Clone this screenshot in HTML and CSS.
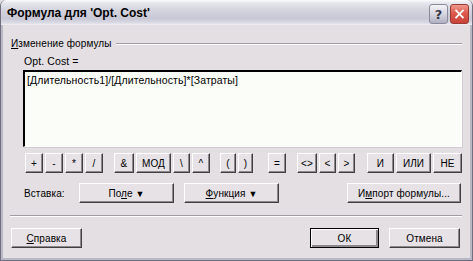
FILE: index.html
```html
<!DOCTYPE html>
<html lang="ru">
<head>
    <meta charset="UTF-8">
    <title>Формула для 'Opt. Cost'</title>
<link rel="stylesheet" href="styles.css">
</head>
<body>
    <div class="window">
        <div class="titlebar">
            <span class="title">Формула для 'Opt. Cost'</span>
            <div class="controls">
                <span class="ctl help">?</span>
                <span class="ctl close">
                    <svg width="19" height="20" viewBox="0 0 19 20">
                        <path d="M5 5.5 L14 14.5 M14 5.5 L5 14.5" stroke="#fff" stroke-width="2" fill="none"/>
                    </svg>
                </span>
            </div>
        </div>

        <div class="content">
            <div class="group-head">
                <span><u>И</u>зменение формулы</span>
                <div class="etch"></div>
            </div>

            <div class="group-body">
                <div class="field-label">Opt. Cost =</div>
                <div class="formula">[Длительность1]/[Длительность]*[Затраты]</div>

                <div class="ops">
                    <div class="op-group">
                        <button class="btn w18">+</button>
                        <button class="btn w18">-</button>
                        <button class="btn w18">*</button>
                        <button class="btn w18">/</button>
                    </div>
                    <div class="op-group g2">
                        <button class="btn w20">&amp;</button>
                        <button class="btn w35">МОД</button>
                        <button class="btn w17">\</button>
                        <button class="btn w18">^</button>
                    </div>
                    <div class="op-group g3">
                        <button class="btn w16">(</button>
                        <button class="btn w15">)</button>
                    </div>
                    <div class="op-group g4">
                        <button class="btn w18">=</button>
                    </div>
                    <div class="op-group g5">
                        <button class="btn w20">&lt;&gt;</button>
                        <button class="btn w17">&lt;</button>
                        <button class="btn w17">&gt;</button>
                    </div>
                    <div class="op-group g6">
                        <button class="btn w27">И</button>
                        <button class="btn w35">ИЛИ</button>
                        <button class="btn w29">НЕ</button>
                    </div>
                </div>

                <div class="insert-row">
                    <span class="insert-label">Вставка:</span>
                    <button class="btn drop">По<u>л</u>е <span class="arrow">&#9660;</span></button>
                    <button class="btn drop func"><u>Ф</u>ункция <span class="arrow">&#9660;</span></button>
                    <button class="btn import">И<u>м</u>порт формулы...</button>
                </div>
            </div>

            <div class="sep"></div>

            <div class="footer">
                <button class="btn wide"><u>С</u>правка</button>
                <div class="footer-right">
                    <button class="btn wide ok">ОК</button>
                    <button class="btn wide">Отмена</button>
                </div>
            </div>
        </div>
    </div>
</body>
</html>
```

FILE: styles.css
```css
body{
    margin: 0;
    background: #e3dfe3;
    font-family: "Liberation Sans", Arial, sans-serif;
    font-size: 10px;
    letter-spacing: 0.1px;
    color: #000;
}

.window{
    width: 473px;
    height: 261px;
    box-sizing: border-box;
    background: #e3dfe3;
    border: 1px solid #6f6f80;
    border-top: none;
    border-radius: 6px 6px 0 0;
    box-shadow: inset 2px 0 0 #b8b8c6, inset -2px 0 0 #b8b8c6, inset 0 -2px 0 #b8b8c6;
    overflow: hidden;
}

.titlebar{
    height: 25px;
    display: flex;
    align-items: center;
    justify-content: space-between;
    padding: 0 4px 0 7px;
    background: linear-gradient(#fbfbfd 0, #e6e6ee 3px, #d4d4de 40%, #c8c8d6 75%, #dcdce6 92%, #f0f0f4 100%);
    margin: 0 -1px;
}

.title{
    font-family: "Liberation Sans", Arial, sans-serif;
    font-weight: bold;
    font-size: 12px;
    letter-spacing: 0;
    color: #000;
    padding-top: 1px;
}

.controls{
    display: flex;
    gap: 2px;
    padding-top: 3px;
}

.ctl{
    width: 19px;
    height: 20px;
    box-sizing: border-box;
    border-radius: 3px;
    display: flex;
    align-items: center;
    justify-content: center;
}

.help{
    border: 1px solid #8a8a9c;
    background: linear-gradient(#f4f4f8, #cfcfdb 60%, #b0b0c4);
    font-family: "DejaVu Sans", sans-serif;
    font-weight: bold;
    font-size: 13px;
    color: #3a3a4a;
}

.close{
    border: 1px solid #9a3a34;
    background: linear-gradient(#f09a8e, #dc5a4c 45%, #c8423a);
}

.content{
    padding: 12px 10px 0 9px;
}

.group-head{
    display: flex;
    align-items: center;
    gap: 4px;
    line-height: 13px;
    padding-left: 1px;
}

.etch{
    flex: 1;
    border-top: 1px solid #a09ca4;
    border-bottom: 1px solid #fff;
    margin-top: 1px;
}

.group-body{
    padding-left: 13px;
}

.field-label{
    line-height: 13px;
    margin-top: 5px;
    padding-left: 1px;
    font-size: 10.5px;
}

.formula{
    margin-top: 2px;
    height: 77px;
    box-sizing: border-box;
    background: #fbfdf9;
    border-top: 2px solid #000;
    border-left: 2px solid #000;
    border-right: 1px solid #fff;
    border-bottom: 1px solid #fff;
    box-shadow: 1px 1px 0 #d0ccd0;
    padding: 2px 2px;
    line-height: 13px;
    font-size: 10.5px;
}

.ops{
    display: flex;
    margin-top: 6px;
    padding-left: 2px;
}

.op-group{
    display: flex;
    gap: 2px;
}

.g2{ margin-left: 11px; }
.g3{ margin-left: 10px; }
.g4{ margin-left: 15px; }
.g5{ margin-left: 11px; }
.g6{ margin-left: 12px; }

.btn{
    height: 20px;
    box-sizing: border-box;
    padding: 0;
    background: #e6e2e6;
    font-family: "Liberation Sans", Arial, sans-serif;
    font-size: 10px;
    letter-spacing: 0.1px;
    color: #000;
    border: 1px solid;
    border-color: #fff #404040 #404040 #fff;
    box-shadow: inset -1px -1px 0 #8c888c;
    outline: none;
}

.w15{ width: 15px; }
.w16{ width: 16px; }
.w17{ width: 17px; }
.w18{ width: 18px; }
.w20{ width: 20px; }
.w27{ width: 27px; }
.w29{ width: 29px; }
.w35{ width: 35px; }

.insert-row{
    display: flex;
    align-items: center;
    margin-top: 10px;
}

.insert-label{
    width: 55px;
    padding-left: 1px;
}

.drop{
    width: 95px;
}

.func{
    margin-left: 10px;
}

.import{
    width: 114px;
    margin-left: auto;
    margin-right: 1px;
}

.arrow{
    font-size: 9px;
    vertical-align: 0;
}

.sep{
    margin-top: 12px;
    border-top: 1px solid #a09ca4;
    border-bottom: 1px solid #fff;
}

.footer{
    display: flex;
    justify-content: space-between;
    margin-top: 11px;
    padding-left: 1px;
}

.footer-right{
    display: flex;
    gap: 10px;
    margin-right: 2px;
}

.wide{
    width: 71px;
}

.ok{
    width: 69px;
    border-color: #000;
    box-shadow: inset 1px 1px 0 #fff, inset -2px -2px 0 #8c888c;
}
```
